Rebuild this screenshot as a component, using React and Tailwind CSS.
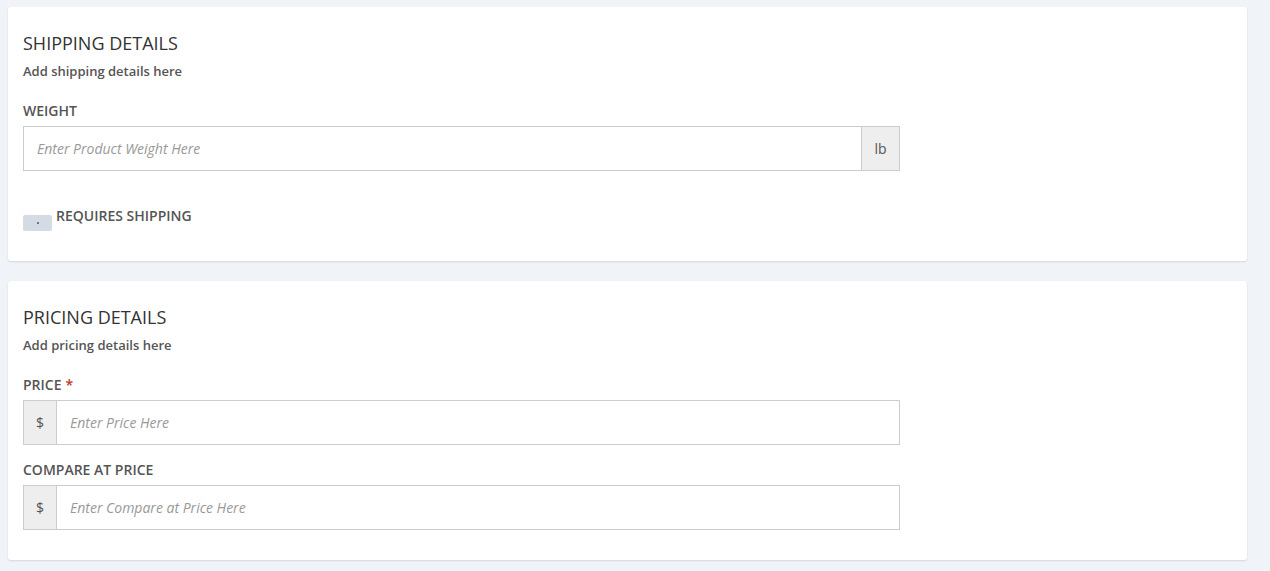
function Label({ children, required }) {
  return (
    <div className="text-[14px] leading-[18px] font-semibold text-[#555] uppercase">
      {children}
      {required && <span className="text-[#c0392b] ml-1">*</span>}
    </div>
  );
}

function AddonInput({ placeholder, prefix, suffix }) {
  return (
    <div className="flex w-[877px] h-[45px] mt-[6px]">
      {prefix && (
        <div className="w-[33px] flex items-center justify-center bg-[#eeeeee] border border-[#cccccc] border-r-0 text-[14px] text-[#555]">
          {prefix}
        </div>
      )}
      <input
        className="flex-1 min-w-0 border border-[#cccccc] px-[13px] text-[14px] text-[#555] italic placeholder:text-[#999] outline-none"
        placeholder={placeholder}
      />
      {suffix && (
        <div className="w-[38px] flex items-center justify-center bg-[#eeeeee] border border-[#cccccc] border-l-0 text-[14px] text-[#555]">
          {suffix}
        </div>
      )}
    </div>
  );
}

function Card({ title, subtitle, children }) {
  return (
    <div className="bg-white rounded-[3px] shadow-[0_1px_2px_rgba(0,0,0,0.12)] px-[15px] pt-[25px] pb-[30px]">
      <h5 className="text-[18px] leading-[22px] text-[#333] uppercase">{title}</h5>
      <p className="mt-[8px] text-[13px] leading-[18px] font-semibold text-[#555]">{subtitle}</p>
      {children}
    </div>
  );
}

export default function App() {
  return (
    <div
      className="min-h-screen bg-[#f0f3f8] pt-[7px] pl-[8px] pr-[23px] pb-[12px] flex flex-col gap-[20px]"
      style={{ fontFamily: '"Open Sans", "Noto Sans", sans-serif' }}
    >
      <Card title="Shipping Details" subtitle="Add shipping details here">
        <div className="mt-[22px]">
          <Label>Weight</Label>
          <AddonInput placeholder="Enter Product Weight Here" suffix="lb" />
        </div>
        <div className="mt-[36px] flex items-start">
          <div className="mt-[8px] w-[29px] h-[16px] rounded-[2px] bg-[#d5dbe5] flex items-center justify-center">
            <span className="block w-[2px] h-[2px] bg-[#555] rounded-full" />
          </div>
          <span className="ml-[4px] text-[14px] leading-[18px] font-semibold text-[#555] uppercase">
            Requires Shipping
          </span>
        </div>
      </Card>

      <Card title="Pricing Details" subtitle="Add pricing details here">
        <div className="mt-[22px]">
          <Label required>Price</Label>
          <AddonInput placeholder="Enter Price Here" prefix="$" />
        </div>
        <div className="mt-[16px]">
          <Label>Compare at Price</Label>
          <AddonInput placeholder="Enter Compare at Price Here" prefix="$" />
        </div>
      </Card>
    </div>
  );
}
